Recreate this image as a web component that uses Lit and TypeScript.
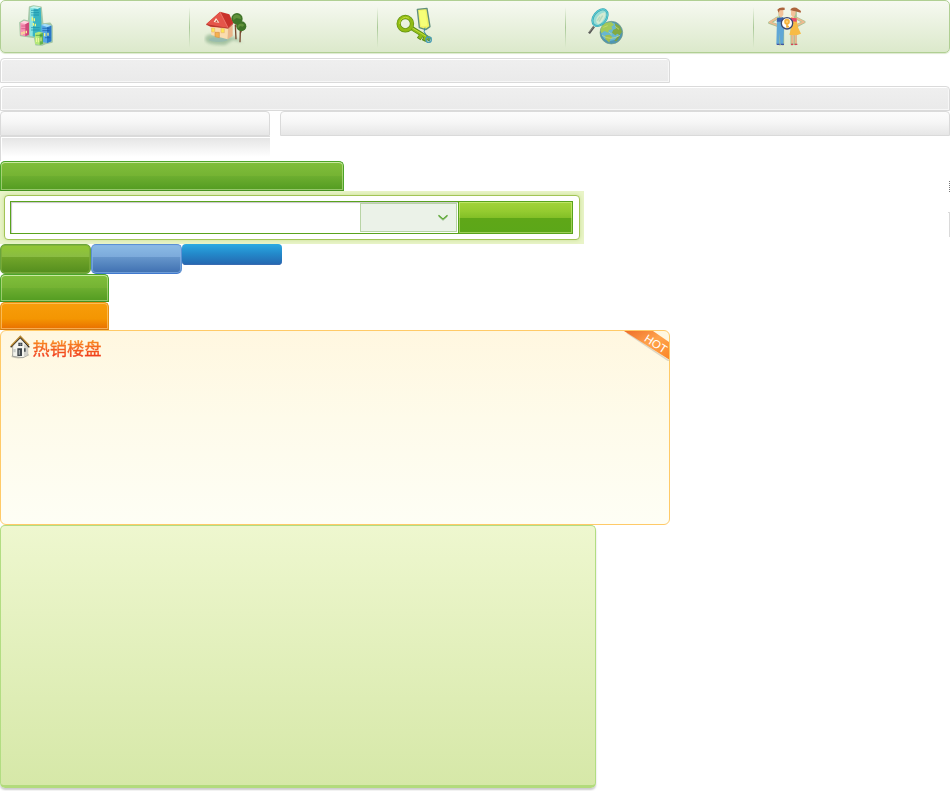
import { LitElement, html, css, svg } from "lit";
import { customElement } from "lit/decorators.js";

const buildings = html`<svg class="ico b1" viewBox="54 15 108 126">
  <g stroke="#8fbb95" stroke-width="5" fill="#8fbb95" stroke-linejoin="round" opacity=".75">
    <path d="M89 21L101 18L123 22L128 72L150 70L156 78V126L134 131L126 135L108 134L104 112L62 106L60 68L72 61L86 64Z"/>
  </g>
  <path d="M90 23L101 19L112 25L109 110L89 108Z" fill="#8ae5e3"/>
  <path d="M101 25L122 23L126 105L109 111L98 109Z" fill="#38b4c2"/>
  <path d="M90 23L101 19L122 22L113 27Z" fill="#c4f6ee"/>
  <path d="M93 31h22M93 38h24M93 45h24M93 83h26M93 90h26" stroke="#168ba8" stroke-width="2"/>
  <path d="M97 52v10M103 55v9M100 69v8M106 71v8" stroke="#eff67e" stroke-width="4"/>
  <path d="M61 69L72 62L87 66V104L76 109L61 105Z" fill="#f791b4"/>
  <path d="M76 72L87 67V104L76 109Z" fill="#ce4778"/>
  <path d="M61 69L72 62L87 66L76 72Z" fill="#ffd5df"/>
  <path d="M64 78h20M64 86h20" stroke="#d14c7c" stroke-width="2"/>
  <path d="M66 96v8M72 94v8M79 92v8" stroke="#f8ef91" stroke-width="4"/>
  <path d="M124 75L135 71L154 77V124L141 129L124 125Z" fill="#56a8e6"/>
  <path d="M141 81L154 77V124L141 129Z" fill="#2a78c8"/>
  <path d="M124 75L135 71L154 77L141 81Z" fill="#a5dff8"/>
  <path d="M127 85h21M127 92h22M135 113h16" stroke="#175aa6" stroke-width="2"/>
  <path d="M134 99v10M144 98v9" stroke="#f1f58a" stroke-width="4"/>
  <path d="M105 99L117 95L129 98V131L119 135L105 131Z" fill="#b4e878"/>
  <path d="M119 102L129 98V131L119 135Z" fill="#65b24d"/>
  <path d="M107 106h20" stroke="#39893a" stroke-width="2"/>
  <path d="M110 113v13M116 114v13M123 112v12" stroke="#f4fa9f" stroke-width="3"/>
</svg>`;

const house = html`<svg class="ico b2" viewBox="612 27 132 114">
  <defs><filter id="soft" x="-20%" y="-30%" width="140%" height="160%"><feGaussianBlur stdDeviation="4"/></filter></defs>
  <path d="M616 112Q622 100 650 104L706 112L728 128L700 120L675 135Q626 136 616 122Z" fill="#86ad88" opacity=".65" filter="url(#soft)"/>
  <ellipse cx="655" cy="119" rx="28" ry="7" fill="#90b8b5" opacity=".6"/>
  <path d="M631 77L684 82L683 118L634 105Z" fill="#fbdcae"/>
  <path d="M684 82L698 74V108L683 118Z" fill="#eab58a"/>
  <path d="M706 74L708 118M712 60L706 82M721 92L720 127M727 84L720 102" stroke="#77472e" stroke-width="4" fill="none"/>
  <circle cx="711" cy="56" r="17" fill="#3f7428"/><circle cx="724" cy="79" r="15" fill="#3f7428"/>
  <path d="M699 50q9-12 22-2l2 9-14-3-9 7z" fill="#60923a"/>
  <path d="M713 76q10-11 21-1l-6 5-8-2-7 8z" fill="#60923a"/>
  <path d="M660 35L618 73L631 80L684 85L700 70L688 43Z" fill="#c9322b"/>
  <path d="M660 36L619 73L655 80L684 84Z" fill="#e5554a"/>
  <path d="M660 36L684 83" stroke="#f79083" stroke-width="2"/>
  <path d="M641 66L648 54L658 68Z" fill="#fff0de"/><path d="M646 65L649 60L653 67Z" fill="#b14735"/>
  <path d="M619 74L684 85L700 71" stroke="#a8352a" stroke-width="2" fill="none"/>
  <path d="M635 84h9v12h-9zM663 85h10v13h-10z" fill="#ffe94f" stroke="#e8b878" stroke-width="2"/>
  <path d="M645 97h13v16l-13-3z" fill="#f5b14e" stroke="#d8944a" stroke-width="2"/>
</svg>`;

const key = html`<svg class="ico b3" viewBox="78 21 111 111">
  <path d="M142 28L171 25L180 80L167 89L148 83Z" fill="#f1f365" stroke="#618f7d" stroke-width="4" stroke-linejoin="round"/>
  <path d="M147 33L166 31L172 77L153 79Z" fill="#f6ff77"/>
  <path d="M123 83L181 119M155 104L146 117M168 110L161 123" stroke="#578b14" stroke-width="13" fill="none"/>
  <path d="M122 83L180 118M155 104L148 115M168 111L163 120" stroke="#8fbb1a" stroke-width="9" fill="none"/>
  <path d="M165 83Q158 95 169 106Q178 111 178 124" fill="none" stroke="#3187aa" stroke-width="3"/>
  <circle cx="176" cy="119" r="8" fill="none" stroke="#4a9db4" stroke-width="4"/>
  <circle cx="106" cy="71" r="20" fill="none" stroke="#5f9012" stroke-width="13"/>
  <circle cx="106" cy="71" r="20" fill="none" stroke="#91bb14" stroke-width="9"/>
  <path d="M89 72A18 18 0 0 1 117 55M127 84L168 109" stroke="#c2de3a" stroke-width="3" fill="none"/>
</svg>`;

const globe = html`<svg class="ico b4" viewBox="651 24 111 111">
  <circle cx="724" cy="98" r="34" fill="#4f96b4" stroke="#779d81" stroke-width="2"/>
  <circle cx="721" cy="95" r="28" fill="#68b7d1"/>
  <path d="M697 76Q708 64 725 67L732 74L724 80L728 88L717 90L714 98L704 93L694 100L691 91Z" fill="#a3c95a"/>
  <path d="M734 69L750 79L756 96L749 106L742 101L736 106L726 98L730 89L738 86Z" fill="#82aa42"/>
  <path d="M706 106L719 104L727 111L720 119L718 128L706 117Z" fill="#a2be4f"/>
  <path d="M741 112L750 109L740 124L733 123Z" fill="#78a144"/>
  <path d="M700 82L713 77M716 96l10 7M735 79l12 9M696 106q25 18 54 0" stroke="#d2df7c" stroke-width="2" fill="none"/>
  <path d="M672 80L657 100" stroke="#575856" stroke-width="7"/>
  <path d="M670 81L657 97" stroke="#9a9b8c" stroke-width="2"/>
  <ellipse cx="690" cy="53" rx="19" ry="28" transform="rotate(38 690 53)" fill="#96ddd5" stroke="#3ba3b0" stroke-width="6"/>
  <ellipse cx="690" cy="53" rx="19" ry="28" transform="rotate(38 690 53)" fill="none" stroke="#59cdd4" stroke-width="3"/>
  <path d="M679 57Q686 40 705 37Q711 47 696 65Q684 78 679 66Z" fill="#d4ead2"/>
  <path d="M687 65l11-18M682 62l8-12" stroke="#b4d8bc" stroke-width="4"/>
</svg>`;

const couple = html`<svg class="ico b5" viewBox="81 18 117 120">
  <g fill="none" stroke="#98b77f" stroke-width="9" stroke-linecap="round" stroke-linejoin="round" opacity=".8">
    <path d="M112 54L89 68L112 76M168 54L192 66L171 77"/>
    <path d="M120 30v102M128 80v52M166 33v98M156 62v70"/>
  </g>
  <path d="M111 54L89 67L112 76M169 54L192 66L172 75" stroke="#efba90" stroke-width="5" fill="none" stroke-linejoin="round"/>
  <path d="M111 54L130 52L132 86L130 132H121L119 98L118 132H109Z" fill="#60a7d6"/>
  <path d="M112 54L130 52L131 65L110 65Z" fill="#3960ad"/>
  <path d="M152 52L169 54L174 82L183 101Q165 110 148 104L155 78Z" fill="#f7bb45"/>
  <path d="M153 53L170 55L170 65L153 64Z" fill="#e64b6b"/>
  <path d="M157 105v25M167 105v25" stroke="#edb68e" stroke-width="6"/>
  <path d="M110 133h9M122 133h10" stroke="#4454a0" stroke-width="4"/>
  <path d="M153 133h7M164 133h8" stroke="#d94358" stroke-width="4"/>
  <path d="M115 30L130 28L130 45L123 53L116 45ZM153 32L168 29L166 44L160 53L153 45Z" fill="#f3c29a"/>
  <path d="M112 29Q119 20 134 23L134 30L119 31L116 38ZM151 31Q154 20 169 23L183 33L182 38L166 34L158 32Z" fill="#ad643d"/>
  <circle cx="141" cy="70" r="17" fill="#fff" stroke="#3d4870" stroke-width="4"/>
  <circle cx="141" cy="65" r="6" fill="#fbd27a" stroke="#f6b13c" stroke-width="5"/>
  <path d="M141 71V83M141 80H147" fill="none" stroke="#f6b13c" stroke-width="5"/>
</svg>`;

const home = html`<svg class="home" viewBox="30 30 60 72">
  <path d="M34 96Q60 107 88 91L82 84L37 88Z" fill="#9e9e91" opacity=".55"/>
  <path d="M38 61L60 40L83 61V90L69 98L38 94Z" fill="#f4f4ee" stroke="#8a8a84" stroke-width="2"/>
  <path d="M72 58L83 64V90L72 95Z" fill="#d2d2cc"/>
  <path d="M32 67L61 37L88 67" stroke="#33291e" stroke-width="4" fill="none"/>
  <path d="M33 63L61 34L87 61" stroke="#b98a35" stroke-width="4" fill="none"/>
  <path d="M55 53h12v10H55z" fill="#343c43"/><path d="M61 53v10M55 58h12" stroke="#ddd" stroke-width="1"/>
  <path d="M52 70h14v23H52z" fill="#3f464b"/><path d="M56 75h4v14h-4z" fill="#9ba2a4"/>
  <path d="M72 70h5v10h-5z" fill="#4c5356"/><path d="M40 72h7v10h-7z" fill="#c9cdc9"/>
</svg>`;

@customElement("app-root")
export class AppRoot extends LitElement {
  static styles = css`
    :host { display: block; width: 950px; height: 791px; overflow: hidden; background: #fff; position: relative;
      font-family: "Liberation Sans", "Noto Sans CJK SC", sans-serif; }
    * { box-sizing: border-box; }
    .nav { display: grid; grid-template-columns: repeat(5, 188px); height: 53px; border: 1px solid #b0cf93; border-radius: 5px;
      background: linear-gradient(#f6f9f1, #dce9cb); box-shadow: inset 0 1px #f6faf0, 0 1px 1px #dce8cf; }
    .cell { position: relative; display: flex; align-items: flex-start; }
    .cell + .cell::before { content: ""; width: 1px; height: 41px; margin-top: 6px; flex: none;
      background: linear-gradient(rgba(166,199,140,0), #a9c997 50%, rgba(166,199,140,0)); }
    .ico { display: block; flex: none; }
    .b1 { width: 36px; height: 42px; margin: 4px 0 0 17px; }
    .b2 { width: 44px; height: 38px; margin: 8px 0 0 14px; }
    .b3 { width: 37px; height: 37px; margin: 6px 0 0 18px; }
    .b4 { width: 37px; height: 37px; margin: 7px 0 0 21px; }
    .b5 { width: 39px; height: 40px; margin: 5px 0 0 13px; }
    .bar { height: 25px; border: 1px solid #dadada; border-radius: 4px 4px 0 0; background: linear-gradient(#efefef, #eaeaea);
      box-shadow: inset 1px 1px #fff, inset -1px -1px #f7f7f7; }
    .short { width: 670px; margin: 5px 0 3px; }
    .heads { display: flex; gap: 10px; }
    .head { height: 25px; border: 1px solid #dadada; border-radius: 4px 4px 0 0; background: linear-gradient(#fcfcfc, #f6f6f6 45%, #e6e6e6); }
    .side { width: 270px; }
    .main { flex: 1; }
    .fade { width: 270px; height: 25px; border-left: 1px solid #dadada; border-top: 1px solid #dadada; padding: 1px 0 0 1px; }
    .fade div { height: 19px; background: linear-gradient(#e5e5e5, #fff); }
    .title { width: 344px; height: 30px; }
    .green { border: 1px solid #4ba528; border-bottom-color: #44921f; border-radius: 5px 5px 0 0;
      background: linear-gradient(#80bf3b, #75b333 50%, #6dae30 50%, #539c21); box-shadow: inset 0 1px rgba(215,240,180,.7), inset 0 0 0 1px rgba(215,240,180,.5); }
    .search { width: 584px; height: 53px; padding: 4px; background: #e9f4c8; }
    .box { width: 576px; height: 45px; padding: 5px; border: 1px solid #a2c456; border-radius: 4px; background: #fff;
      box-shadow: 0 0 4px #c9e094; }
    .field { width: 563px; height: 33px; display: flex; border: 1px solid #59a31d; box-shadow: inset 1px 1px 1px #c5c5c5; }
    .input { width: 349px; }
    .select { width: 97px; height: 29px; margin-top: 1px; border: 1px solid #b8d4a5; background: #ebf2e8; display: flex;
      align-items: center; justify-content: flex-end; padding-right: 8px; }
    .select svg { width: 10px; height: 7px; display: block; }
    .go { width: 114px; height: 31px; margin-left: auto; border-left: 1px solid #59a31d;
      background: linear-gradient(#a3d43a, #94cb30 30%, #82bf26 52%, #5fa718 52%, #5ca719);
      box-shadow: inset 0 0 0 1px rgba(220,245,150,.5); }
    .buttons { display: flex; height: 30px; align-items: flex-start; }
    .btn { width: 91px; height: 30px; border-radius: 5px; }
    .lime { border: 1px solid #6aa53c; background: linear-gradient(#92c832, #8abc43 42%, #72a62a 43%, #548e1e);
      box-shadow: inset 0 0 0 1px rgba(125,172,60,.75); }
    .sky { border: 1px solid #5b91d3; border-bottom-color: #4079ce; background: linear-gradient(#8bbbe5, #7caadb 42%, #6696cb 43%, #3f70b1);
      box-shadow: inset 0 0 0 1px rgba(133,178,232,.65); }
    .deep { width: 100px; height: 21px; border-radius: 4px; background: linear-gradient(#2caae2, #238acb 45%, #2566af);
      box-shadow: inset 0 -1px #386bb2; }
    .tab { width: 109px; height: 28px; }
    .orange { border: 1px solid #e8900f; border-bottom-color: #cf7b16; border-radius: 5px 5px 0 0;
      background: linear-gradient(#f79d0b, #f49602 60%, #e96f00); box-shadow: inset 0 0 0 1px rgba(255,210,135,.6); }
    .hot { position: relative; width: 670px; height: 195px; border: 1px solid #ffca68; border-radius: 6px; overflow: hidden;
      background: linear-gradient(#fff7e0, #fefbea 45%, #fefef5); display: flex; align-items: flex-start; }
    .home { width: 20px; height: 24px; margin: 4px 0 0 9px; flex: none; }
    .name { margin: 5px 0 0 2.5px; font: 400 17.3px/24px "Noto Sans CJK SC", sans-serif; white-space: nowrap;
      -webkit-text-stroke: .35px transparent;
      background: linear-gradient(#f88c20 20%, #f1401c 80%); -webkit-background-clip: text; background-clip: text; color: transparent; }
    .ribbon { position: absolute; right: 0; top: 0; width: 46px; height: 30px; }
    .ribbon text { font: 11.5px "Liberation Sans", sans-serif; fill: #fff; }
    .panel { width: 596px; height: 263px; border: 1px solid #b2dd82; border-bottom: 3px solid #b2db7c; border-radius: 5px;
      background: linear-gradient(#eef7cf, #d6e8a8); box-shadow: 0 2px 2px #ccc; }
    .dots { position: absolute; left: 949px; top: 181px; width: 1px; height: 11px;
      background: repeating-linear-gradient(#777 0 1px, #fff 1px 2px); }
    .edge { position: absolute; left: 948px; top: 212px; width: 2px; height: 25px; border: solid #dadada; border-width: 1px 1px 0 0; }
  `;

  render() {
    return html`
      <div class="nav">${[buildings, house, key, globe, couple].map((i) => html`<div class="cell">${i}</div>`)}</div>
      <div class="bar short"></div>
      <div class="bar"></div>
      <div class="heads"><div class="head side"></div><div class="head main"></div></div>
      <div class="fade"><div></div></div>
      <div class="title green"></div>
      <div class="search"><div class="box"><div class="field">
        <div class="input"></div>
        <div class="select"><svg viewBox="0 0 10 7"><path d="M.5 2.5L5 6.5L9.5 2.5" fill="none" stroke="#b5ceae" stroke-width="1"/><path d="M.5 1.2L5 5.2L9.5 1.2" fill="none" stroke="#55a42b" stroke-width="1.2"/></svg></div>
        <div class="go"></div>
      </div></div></div>
      <div class="buttons"><div class="btn lime"></div><div class="btn sky"></div><div class="deep"></div></div>
      <div class="tab green"></div>
      <div class="tab orange"></div>
      <div class="hot">${home}<span class="name">热销楼盘</span>
        <svg class="ribbon" viewBox="0 0 46 30">
          <defs><linearGradient id="rg" x1="0" x2="1" y1="0" y2="1"><stop offset="0" stop-color="#ee6d28"/><stop offset=".5" stop-color="#ffa44c"/><stop offset="1" stop-color="#fb8425"/></linearGradient></defs>
          <path d="M4 2L46 30" stroke="#ddd6c4" stroke-width="1.5"/>
          <path d="M1 0H30L46 11V28.5Z" fill="url(#rg)"/>
          ${svg`<text x="20.5" y="9.5" transform="rotate(33 20.5 9.5)">HOT</text>`}
        </svg>
      </div>
      <div class="panel"></div>
      <div class="dots"></div><div class="edge"></div>
    `;
  }
}
